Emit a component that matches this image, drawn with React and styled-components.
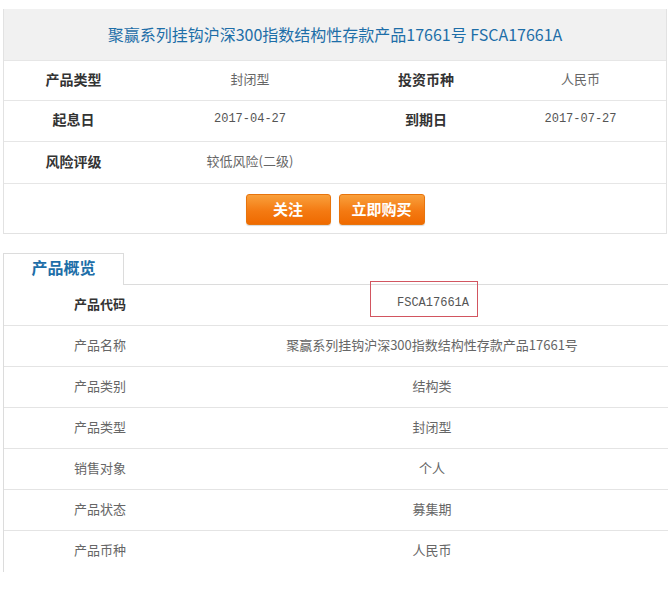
import React from "react";
import styled, { createGlobalStyle } from "styled-components";

const Global = createGlobalStyle`
  html, body { margin: 0; padding: 0; background: #fff; }
  body { font-family: "Noto Sans CJK SC", "Liberation Sans", sans-serif; }
`;

const Page = styled.div`
  width: 668px;
  padding: 9px 0 0 3px;
  box-sizing: border-box;
`;

const Card = styled.section`
  border-left: 1px solid #e2e2e2;
  border-right: 1px solid #e2e2e2;
  border-bottom: 1px solid #e2e2e2;
  margin-right: 1px;
`;

const Header = styled.h1`
  margin: 0;
  height: 52px;
  box-sizing: border-box;
  padding-bottom: 2px;
  display: flex;
  align-items: center;
  justify-content: center;
  background: #f1f1f1;
  color: #1d6ea8;
  font-size: 16px;
  font-weight: normal;
  border-bottom: 1px solid #e6e6e6;
`;

const InfoRow = styled.div`
  display: grid;
  grid-template-columns: 139px 214px 138px 1fr;
  height: ${(p) => p.$h || 40}px;
  box-sizing: border-box;
  padding-bottom: 4px;
  align-items: center;
  border-bottom: 1px solid #e6e6e6;
`;

const InfoLabel = styled.div`
  text-align: center;
  font-size: 14px;
  font-weight: bold;
  color: #333;
`;

const InfoValue = styled.div`
  text-align: center;
  font-size: ${(p) => (p.$mono ? "12px" : "13px")};
  font-family: ${(p) =>
    p.$mono ? '"Liberation Mono", "Noto Sans CJK SC", monospace' : "inherit"};
  color: ${(p) => (p.$mono ? "#555" : "#666")};
`;

const Actions = styled.div`
  display: flex;
  justify-content: center;
  gap: 8px;
  padding: 10px 0 8px;
`;

const OrangeButton = styled.button`
  width: ${(p) => p.$w}px;
  height: 31px;
  border: 1px solid #e8740c;
  border-radius: 3px;
  background: linear-gradient(#f9a03c, #f47a12 55%, #ef6a00);
  color: #fff;
  font-family: inherit;
  font-size: 15px;
  font-weight: bold;
  padding: 0 0 2px;
  box-shadow: 0 1px 1px rgba(0, 0, 0, 0.15);
  cursor: pointer;
`;

const Overview = styled.section`
  margin-top: 19px;
`;

const TabBar = styled.div`
  display: flex;
  height: 32px;
`;

const Tab = styled.div`
  width: 121px;
  box-sizing: border-box;
  border: 1px solid #dcdcdc;
  border-bottom: none;
  padding-bottom: 5px;
  display: flex;
  align-items: center;
  justify-content: center;
  color: #1d6ea8;
  font-size: 16px;
  font-weight: bold;
  background: #fff;
`;

const TabRest = styled.div`
  flex: 1;
  border-bottom: 1px solid #dcdcdc;
`;

const Table = styled.div`
  border-left: 1px solid #dcdcdc;
  position: relative;
`;

const TableRow = styled.div`
  display: grid;
  grid-template-columns: 192px 1fr;
  height: 41px;
  box-sizing: border-box;
  padding-bottom: 4px;
  align-items: center;
  border-bottom: ${(p) => (p.$last ? "none" : "1px solid #e4e4e4")};
`;

const TableLabel = styled.div`
  text-align: center;
  font-size: 13px;
  font-weight: ${(p) => (p.$bold ? "bold" : "normal")};
  color: ${(p) => (p.$bold ? "#333" : "#666")};
`;

const TableValue = styled.div`
  text-align: center;
  padding-left: ${(p) => (p.$mono ? "2px" : "0")};
  font-size: ${(p) => (p.$mono ? "12px" : "13px")};
  font-family: ${(p) =>
    p.$mono ? '"Liberation Mono", "Noto Sans CJK SC", monospace' : "inherit"};
  color: ${(p) => (p.$mono ? "#555" : "#666")};
`;

const Highlight = styled.div`
  position: absolute;
  left: 366px;
  top: -4px;
  width: 108px;
  height: 36px;
  border: 1.5px solid #d25560;
  box-sizing: border-box;
  pointer-events: none;
`;

const info = [
  ["产品类型", "封闭型", "投资币种", "人民币", false],
  ["起息日", "2017-04-27", "到期日", "2017-07-27", true],
  ["风险评级", "较低风险(二级)", "", "", false],
];

const rows = [
  ["产品代码", "FSCA17661A", true, true],
  ["产品名称", "聚赢系列挂钩沪深300指数结构性存款产品17661号"],
  ["产品类别", "结构类"],
  ["产品类型", "封闭型"],
  ["销售对象", "个人"],
  ["产品状态", "募集期"],
  ["产品币种", "人民币"],
];

export default function App() {
  return (
    <Page>
      <Global />
      <Card>
        <Header>聚赢系列挂钩沪深300指数结构性存款产品17661号 FSCA17661A</Header>
        {info.map((r, i) => (
          <InfoRow key={i} $h={i === 2 ? 42 : i === 1 ? 41 : 40}>
            <InfoLabel>{r[0]}</InfoLabel>
            <InfoValue $mono={r[4]}>{r[1]}</InfoValue>
            <InfoLabel>{r[2]}</InfoLabel>
            <InfoValue $mono={r[4]}>{r[3]}</InfoValue>
          </InfoRow>
        ))}
        <Actions>
          <OrangeButton $w={85}>关注</OrangeButton>
          <OrangeButton $w={86}>立即购买</OrangeButton>
        </Actions>
      </Card>
      <Overview>
        <TabBar>
          <Tab>产品概览</Tab>
          <TabRest />
        </TabBar>
        <Table>
          {rows.map(([label, value, bold, mono], i) => (
            <TableRow key={label + i} $last={i === rows.length - 1}>
              <TableLabel $bold={bold}>{label}</TableLabel>
              <TableValue $mono={mono}>{value}</TableValue>
            </TableRow>
          ))}
          <Highlight />
        </Table>
      </Overview>
    </Page>
  );
}
